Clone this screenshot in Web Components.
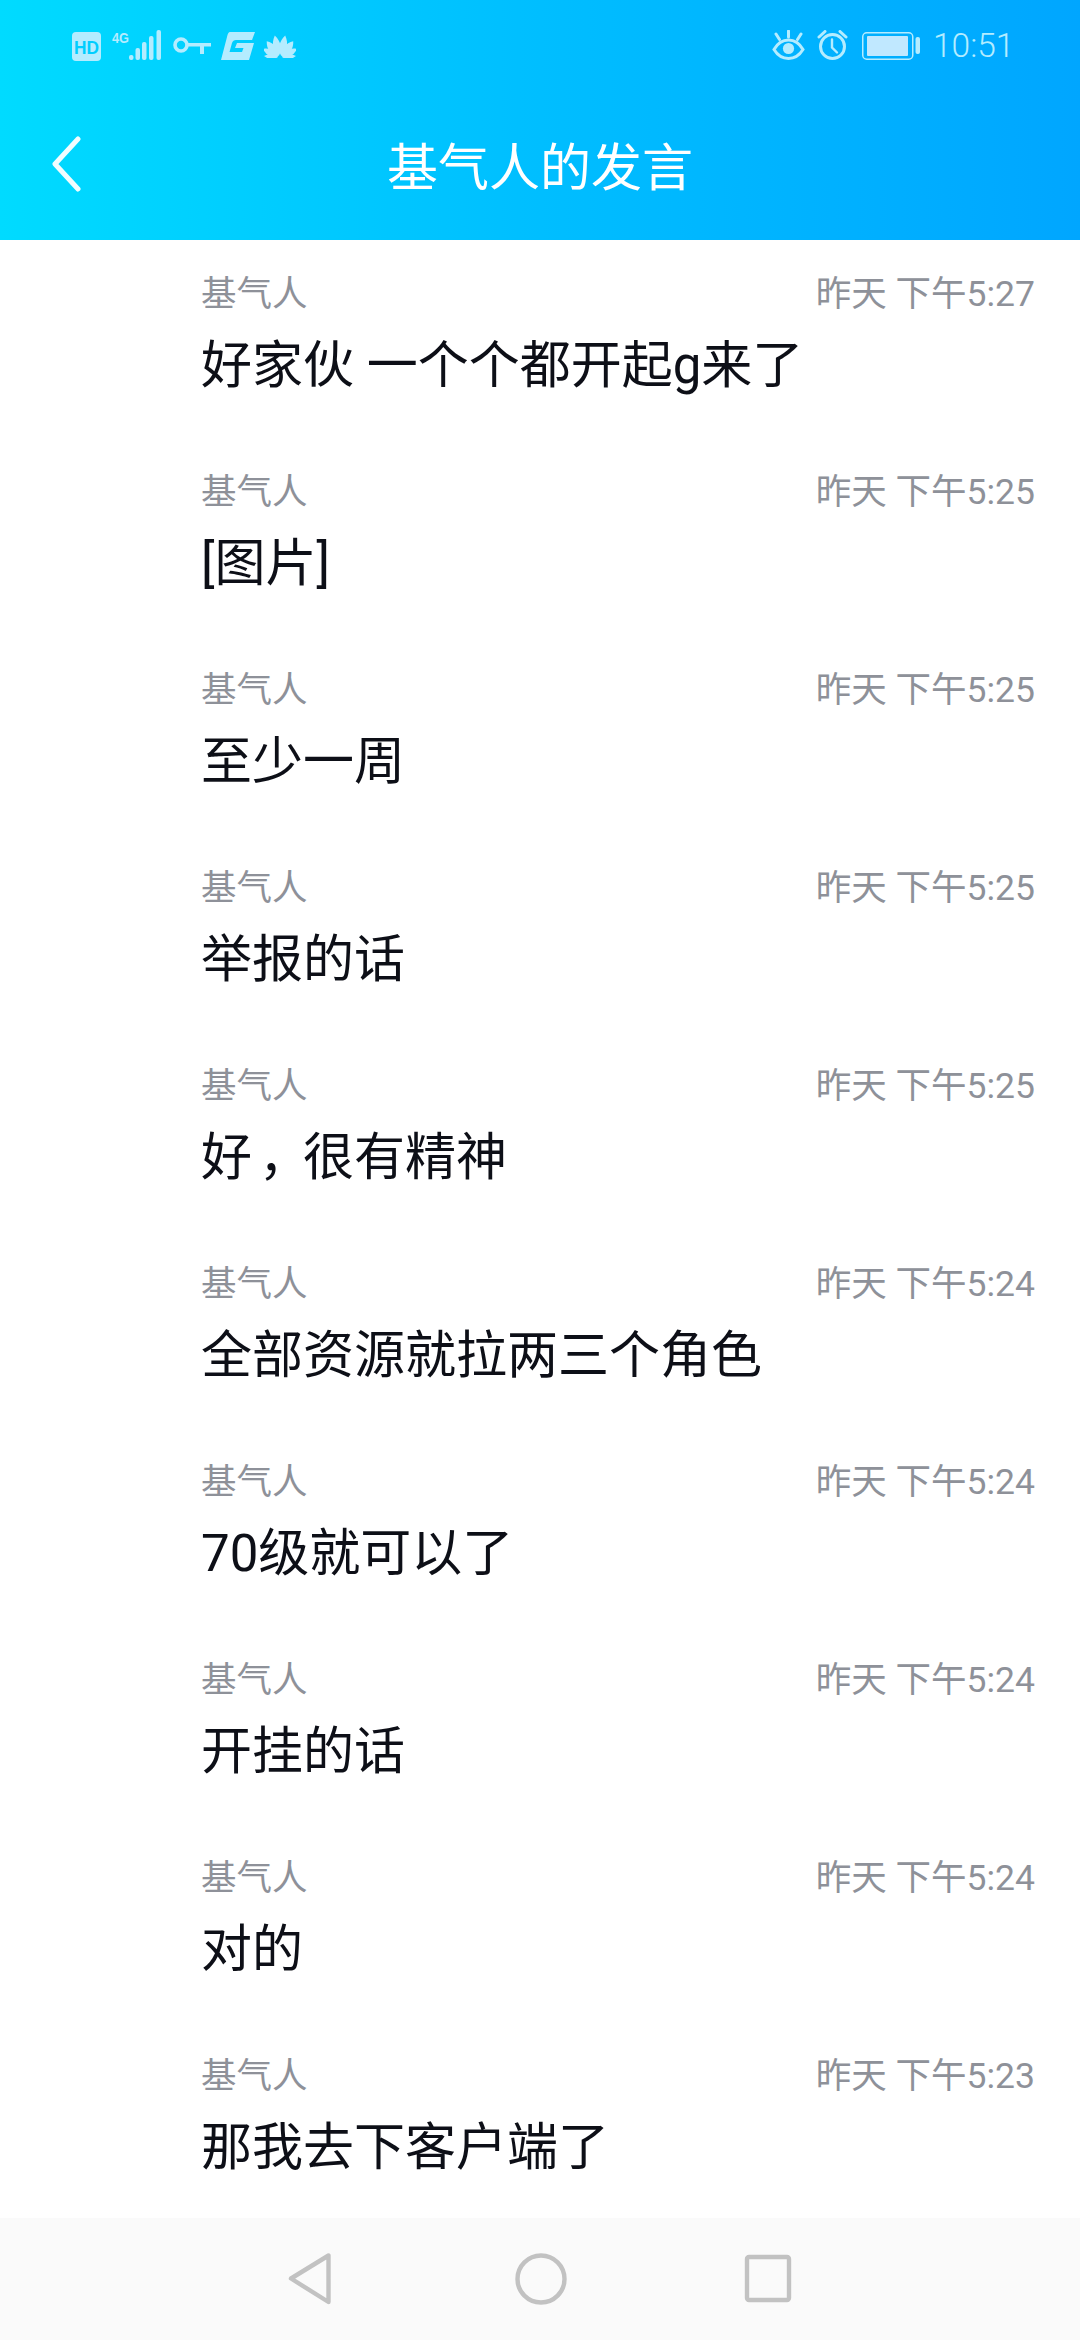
<!DOCTYPE html>
<html lang="zh-CN">
<head>
<meta charset="utf-8">
<title>基气人的发言</title>
<style>
  html, body { margin: 0; padding: 0; background: #fff; }
  body { font-family: Roboto, "Noto Sans CJK SC", sans-serif; }
  .comma { display: inline-block; width: 41px; margin-left: 10px; font-feature-settings: "palt"; }
</style>
</head>
<body>
<phone-screen>
  <app-header slot="header" title-text="基气人的发言"></app-header>
  <chat-line time="昨天 下午5:27">好家伙 一个个都开起g来了</chat-line>
  <chat-line time="昨天 下午5:25">[图片]</chat-line>
  <chat-line time="昨天 下午5:25">至少一周</chat-line>
  <chat-line time="昨天 下午5:25">举报的话</chat-line>
  <chat-line time="昨天 下午5:25">好<span class="comma">，</span>很有精神</chat-line>
  <chat-line time="昨天 下午5:24">全部资源就拉两三个角色</chat-line>
  <chat-line time="昨天 下午5:24">70级就可以了</chat-line>
  <chat-line time="昨天 下午5:24">开挂的话</chat-line>
  <chat-line time="昨天 下午5:24">对的</chat-line>
  <chat-line time="昨天 下午5:23">那我去下客户端了</chat-line>
  <nav-bar slot="footer"></nav-bar>
</phone-screen>

<script>
const fontStack = `Roboto, "Noto Sans CJK SC", sans-serif`;
const iconColor = "#b4ecff";

class PhoneScreen extends HTMLElement {
  constructor() {
    super();
    this.attachShadow({ mode: "open" });
    this.shadowRoot.innerHTML = `
<style>
  :host {
    display: flex;
    flex-direction: column;
    width: 1080px;
    height: 2340px;
    overflow: hidden;
    background: #fff;
  }
  main { flex: 1; min-height: 0; overflow: hidden; }
</style>
<slot name="header"></slot>
<main><slot></slot></main>
<slot name="footer"></slot>`;
  }
}

class StatusBar extends HTMLElement {
  constructor() {
    super();
    this.attachShadow({ mode: "open" });
    this.shadowRoot.innerHTML = `
<style>
  :host {
    display: flex;
    justify-content: space-between;
    align-items: flex-start;
    height: 90px;
    padding: 30px 71px 0 72px;
    box-sizing: border-box;
    color: ${iconColor};
    font-family: ${fontStack};
  }
  .side { display: flex; align-items: flex-start; }
  svg { display: block; fill: ${iconColor}; }
  text { font-family: "Liberation Sans", sans-serif; font-weight: 700; }
  .time { font-size: 33.5px; font-weight: 300; line-height: 32px; margin-left: 13px; width: 76px; white-space: nowrap; }
</style>
<div class="side">
  <svg width="29" height="31" viewBox="0 0 29 31" style="margin-top:2px">
    <rect width="29" height="29" rx="4"/>
    <text x="14.5" y="21.5" font-size="19" text-anchor="middle" textLength="25" lengthAdjust="spacingAndGlyphs" style="fill:#00ceff">HD</text>
  </svg>
  <svg width="49" height="31" viewBox="0 0 49 31" style="margin-left:11px">
    <text x="0" y="13" font-size="15" textLength="17" lengthAdjust="spacingAndGlyphs">4G</text>
    <rect x="17" y="25" width="4.5" height="5" rx="2"/>
    <rect x="23.5" y="18" width="4.5" height="12" rx="2"/>
    <rect x="30" y="12" width="4.5" height="18" rx="2"/>
    <rect x="37" y="6" width="4.5" height="24" rx="2"/>
    <rect x="44.5" y="0" width="4.5" height="30" rx="2"/>
  </svg>
  <svg width="38" height="18" viewBox="0 0 38 18" style="margin-left:12px;margin-top:7px">
    <circle cx="8" cy="8" r="6" fill="none" stroke="${iconColor}" stroke-width="3.6"/>
    <path d="M14 6h24v3.6h-7v7.4h-4V9.6H14z"/>
  </svg>
  <svg width="34" height="28" viewBox="0 0 34 28" style="margin-left:10px;margin-top:2px">
    <path d="M9 0H34L31 8H15Q12 8 11 11L8.5 20H21L22.5 16H14L16 11H33L28 28H0L6 5Q7 0 9 0Z"/>
  </svg>
  <svg width="32" height="24" viewBox="-16 -22 32 24" style="margin-left:9px;margin-top:4px">
    <path d="M0 0C-5-6-5-14 0-21C5-14 5-6 0 0Z" transform="translate(-1.2 0) rotate(-11)"/>
    <path d="M0 0C5-6 5-14 0-21C-5-14-5-6 0 0Z" transform="translate(1.2 0) rotate(11)"/>
    <path d="M0 0C-5-6-5-13 0-19C5-13 5-6 0 0Z" transform="translate(-1.8 .3) rotate(-37)"/>
    <path d="M0 0C5-6 5-13 0-19C-5-13-5-6 0 0Z" transform="translate(1.8 .3) rotate(37)"/>
    <path d="M0 0C-4.5-5-4.5-11 0-17C4.5-11 4.5-5 0 0Z" transform="translate(-2 .8) rotate(-62)"/>
    <path d="M0 0C4.5-5 4.5-11 0-17C-4.5-11-4.5-5 0 0Z" transform="translate(2 .8) rotate(62)"/>
    <path d="M0 0C-3.5-4-3.5-9 0-14C3.5-9 3.5-4 0 0Z" transform="translate(-2 1) rotate(-86)"/>
    <path d="M0 0C3.5-4 3.5-9 0-14C-3.5-9-3.5-4 0 0Z" transform="translate(2 1) rotate(86)"/>
  </svg>
</div>
<div class="side">
  <svg width="33" height="30" viewBox="0 0 33 30">
    <path d="M2 19.5C6 12.5 11 10 16.5 10S27 12.5 31 19.5C27 26 22 28.5 16.5 28.5S6 26 2 19.5Z" fill="none" stroke="${iconColor}" stroke-width="3"/>
    <circle cx="16.5" cy="18.5" r="5.6"/>
    <path d="M16.5 1v6M4 4l3.5 5.5M29 4l-3.5 5.5" stroke="${iconColor}" stroke-width="3" stroke-linecap="round" fill="none"/>
  </svg>
  <svg width="31" height="30" viewBox="0 0 31 30" style="margin-left:12px">
    <circle cx="15.5" cy="16.5" r="12" fill="none" stroke="${iconColor}" stroke-width="3"/>
    <path d="M15 9.5v8l5 5" fill="none" stroke="${iconColor}" stroke-width="2.4" stroke-linecap="round"/>
    <path d="M2 7L8 1.5M29 7L23 1.5" fill="none" stroke="${iconColor}" stroke-width="3" stroke-linecap="round"/>
  </svg>
  <svg width="58" height="29" viewBox="0 0 58 29" style="margin-left:14px;margin-top:2px">
    <rect x=".75" y=".75" width="50" height="26.5" rx="4" fill="none" stroke="${iconColor}" stroke-width="1.5"/>
    <rect x="5" y="4" width="41" height="20" rx="1" fill="#c0e8ff"/>
    <rect x="53.5" y="5" width="4.5" height="17" rx="2"/>
  </svg>
  <span class="time">10:51</span>
</div>`;
  }
}

class AppHeader extends HTMLElement {
  constructor() {
    super();
    this.attachShadow({ mode: "open" });
    this.shadowRoot.innerHTML = `
<style>
  :host {
    display: block;
    height: 240px;
    background: linear-gradient(90deg, #00dbff 0%, #00bfff 48%, #00a6ff 100%);
    font-family: ${fontStack};
  }
  .bar {
    display: grid;
    grid-template-columns: 150px 1fr 150px;
    align-items: center;
    height: 150px;
  }
  .back { display: block; margin: -2px 0 0 50px; }
  h1 {
    margin: 8px 0 0;
    font-size: 51px;
    font-weight: 400;
    line-height: 60px;
    color: #fff;
    text-align: center;
  }
</style>
<status-bar></status-bar>
<div class="bar">
  <svg class="back" width="34" height="56" viewBox="0 0 34 56">
    <path d="M28 3L5 28l23 25" fill="none" stroke="#fff" stroke-width="5" stroke-linecap="round" stroke-linejoin="round" opacity=".95"/>
  </svg>
  <h1></h1>
  <span></span>
</div>`;
    this.shadowRoot.querySelector("h1").textContent = this.getAttribute("title-text");
  }
}

class ChatLine extends HTMLElement {
  constructor() {
    super();
    this.attachShadow({ mode: "open" });
    this.shadowRoot.innerHTML = `
<style>
  :host {
    display: block;
    height: 198px;
    box-sizing: border-box;
    padding: 29px 45px 0 201px;
    font-family: ${fontStack};
  }
  .top {
    display: flex;
    justify-content: space-between;
    height: 50px;
    line-height: 50px;
    font-size: 35.5px;
    color: #8e9199;
  }
  .body {
    margin-top: 12px;
    line-height: 70px;
    font-size: 51px;
    color: #0d0f17;
    white-space: nowrap;
  }
</style>
<div class="top"><span class="name">基气人</span><span class="time"></span></div>
<div class="body"><slot></slot></div>`;
    this.shadowRoot.querySelector(".time").textContent = this.getAttribute("time");
  }
}

class NavBar extends HTMLElement {
  constructor() {
    super();
    this.attachShadow({ mode: "open" });
    this.shadowRoot.innerHTML = `
<style>
  :host {
    display: flex;
    justify-content: center;
    align-items: flex-start;
    height: 122px;
    padding-top: 34px;
    box-sizing: border-box;
    background: #fafafa;
  }
  svg { display: block; fill: none; stroke: #c2c2c2; stroke-width: 4.4; stroke-linejoin: round; }
</style>
<svg width="46" height="54" viewBox="0 0 46 54">
  <path d="M41.5 3.5V50L4 26.5Z"/>
</svg>
<svg width="54" height="54" viewBox="0 0 54 54" style="margin-left:181px">
  <circle cx="27" cy="27" r="23.5"/>
</svg>
<svg width="50" height="54" viewBox="0 0 50 54" style="margin-left:176px">
  <rect x="3" y="5" width="42" height="43" rx="2"/>
</svg>`;
  }
}

customElements.define("status-bar", StatusBar);
customElements.define("app-header", AppHeader);
customElements.define("chat-line", ChatLine);
customElements.define("nav-bar", NavBar);
customElements.define("phone-screen", PhoneScreen);
</script>
</body>
</html>
